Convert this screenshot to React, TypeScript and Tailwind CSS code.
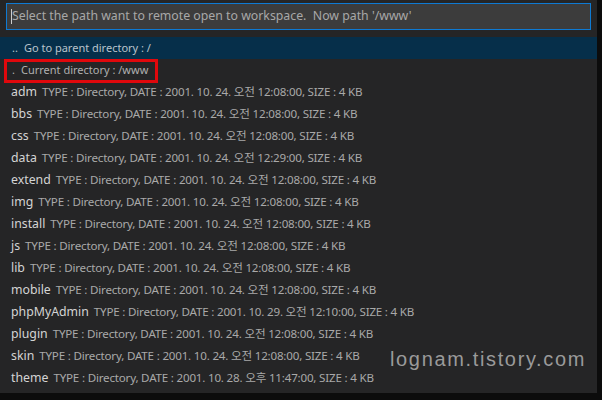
import React from 'react';

const rows = [
  ['adm', '2001. 10. 24. 오전 12:08:00'],
  ['bbs', '2001. 10. 24. 오전 12:08:00'],
  ['css', '2001. 10. 24. 오전 12:08:00'],
  ['data', '2001. 10. 24. 오전 12:29:00'],
  ['extend', '2001. 10. 24. 오전 12:08:00'],
  ['img', '2001. 10. 24. 오전 12:08:00'],
  ['install', '2001. 10. 24. 오전 12:08:00'],
  ['js', '2001. 10. 24. 오전 12:08:00'],
  ['lib', '2001. 10. 24. 오전 12:08:00'],
  ['mobile', '2001. 10. 24. 오전 12:08:00'],
  ['phpMyAdmin', '2001. 10. 29. 오전 12:10:00'],
  ['plugin', '2001. 10. 24. 오전 12:08:00'],
  ['skin', '2001. 10. 24. 오전 12:08:00'],
  ['theme', '2001. 10. 28. 오후 11:47:00'],
];

export default function App() {
  return (
    <div
      className="w-[602px] h-[400px] bg-[#0c0c0c] overflow-hidden"
      style={{ fontFamily: '"Noto Sans", "Noto Sans CJK KR", sans-serif' }}
    >
      <div className="relative w-[597px] h-[393px] bg-[#252526]">
        {/* input */}
        <div className="pt-[3px] px-[6px] pb-[7px]">
          <div className="h-[27px] bg-[#3c3c3c] border border-[#0e7ad3] flex items-center pl-[4px] text-[12.3px] text-[#a8a8a8] whitespace-nowrap">
            <span className="w-px h-[15px] bg-[#cccccc]" />
            Select the path want to remote open to workspace.&nbsp; Now path '/www'
          </div>
        </div>

        {/* list */}
        <div className="flex flex-col">
          <div className="h-[22px] bg-[#062f4a] flex items-center pl-[12px] text-[11px] text-[#b9c3cb]">
            <span className="mr-[6px]">..</span>Go to parent directory : /
          </div>
          <div className="h-[22px] flex items-center pl-[12px] text-[11px] text-[#b0b0b0]">
            <span className="mr-[6px]">.</span>Current directory : /www
          </div>
          {rows.map(([name, date]) => (
            <div key={name} className="h-[22px] flex items-center pl-[11px] gap-[5px] whitespace-nowrap">
              <span className="text-[12.3px] text-[#d4d4d4]">{name}</span>
              <span className="text-[11.6px] text-[#a9a9a9] tracking-[-0.2px]">
                TYPE : Directory, DATE : {date}, SIZE : 4 KB
              </span>
            </div>
          ))}
        </div>

        {/* highlight box */}
        <div className="absolute left-[4px] top-[59px] w-[154px] h-[24px] border-[3px] border-[#e0080c]" />

        {/* watermark */}
        <div
          className="absolute left-[390px] top-[344px] text-[20px] tracking-[1.65px] text-[#9a9a9a]"
          style={{ fontFamily: '"Liberation Sans", sans-serif' }}
        >
          lognam.tistory.com
        </div>
      </div>
    </div>
  );
}
